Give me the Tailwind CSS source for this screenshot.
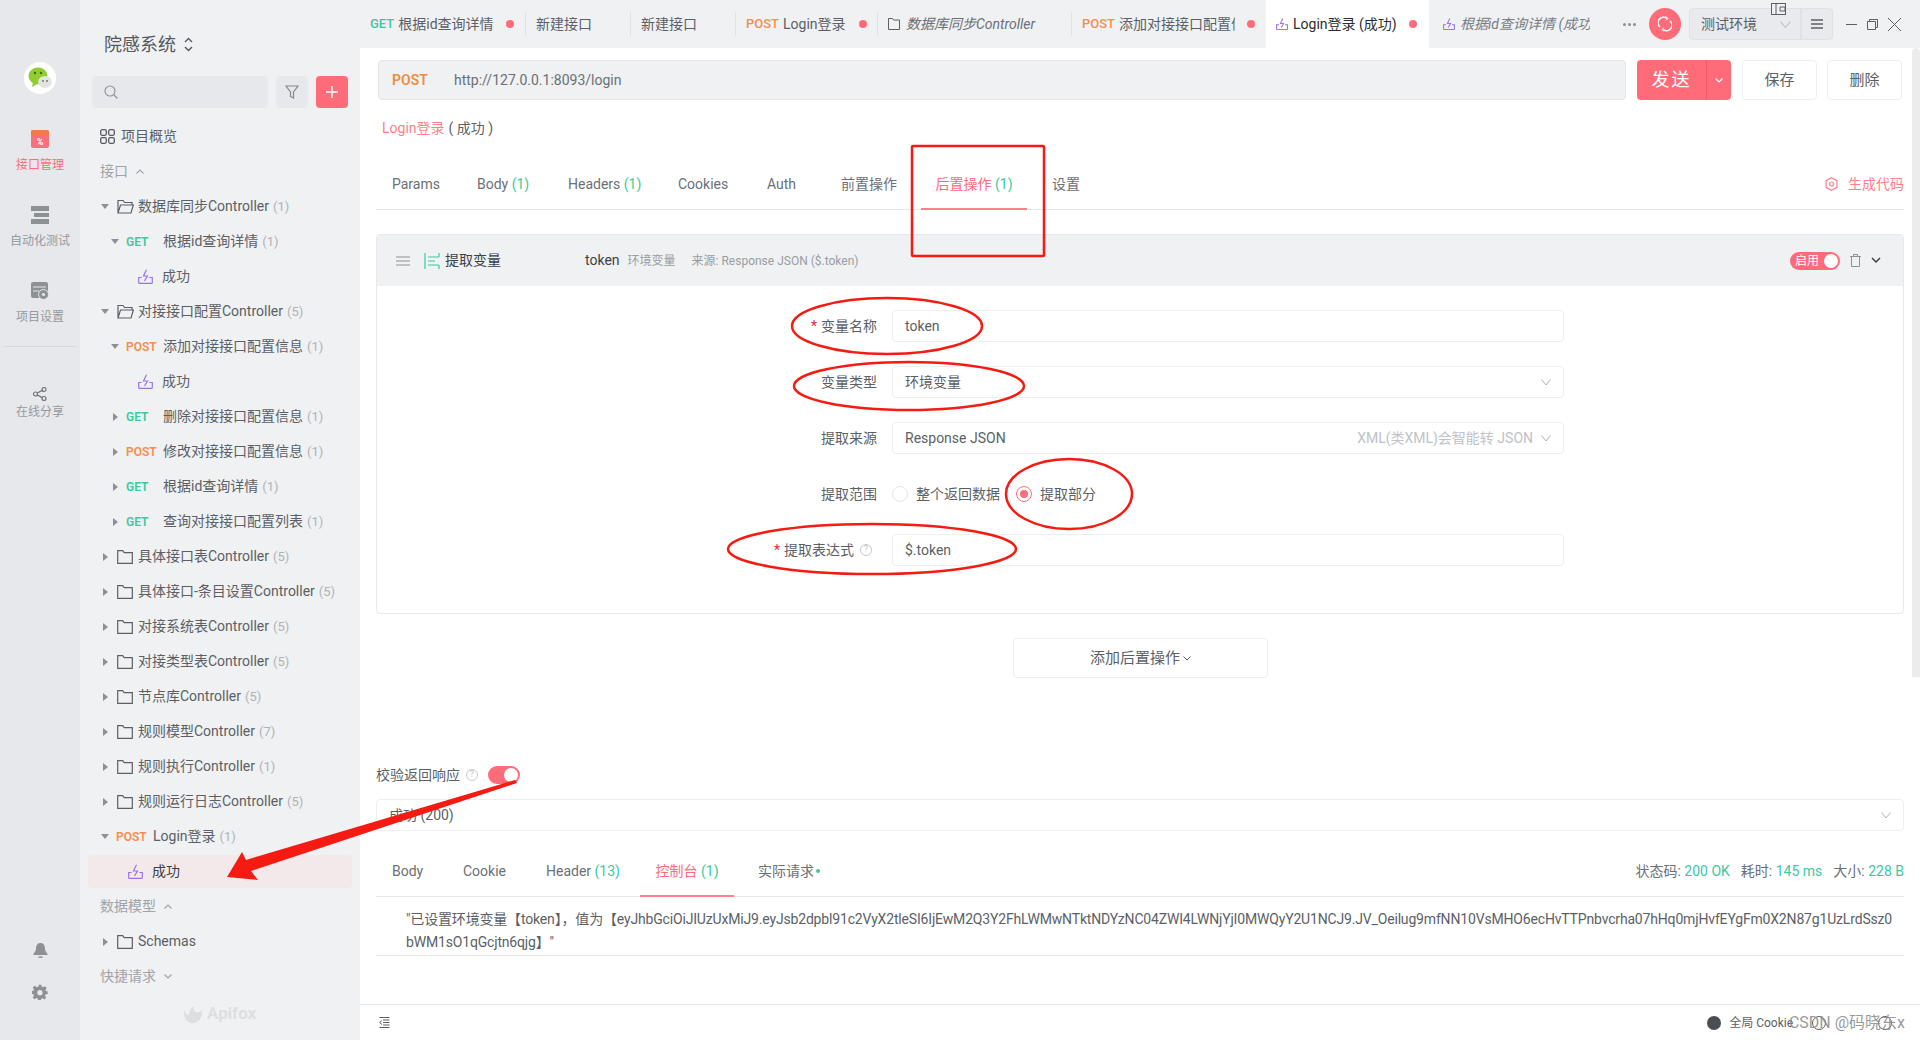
<!DOCTYPE html>
<html lang="zh-CN">
<head>
  <meta charset="UTF-8">
  <title>Apifox - Login登录</title>
  <script src="https://cdn.jsdelivr.net/npm/@tailwindcss/browser@4"></script>
</head>
<body class="relative flex w-[1920px] h-[1040px] overflow-hidden bg-white text-[14px] text-[#5c5f66] font-['Roboto','Noto_Sans_CJK_SC',sans-serif]">
  <!-- Rail -->
  <div class="flex flex-col items-center w-20 shrink-0 bg-[#e6e8eb] text-[12px] text-[#96999e]">
    <div class="flex items-center justify-center mt-[62px] w-8 h-8 rounded-full bg-white">
      <svg class="w-7 h-7" viewBox="0 0 28 28"><ellipse cx="12" cy="12" rx="9.5" ry="8.5" fill="#8fce2e"/><path d="M7 18l-1 5 5-3z" fill="#8fce2e"/><ellipse cx="19" cy="18" rx="7" ry="6" fill="#e4e4e0"/><circle cx="9" cy="9" r="1.2" fill="#3d6b10"/><circle cx="15" cy="9" r="1.2" fill="#3d6b10"/><circle cx="17" cy="17" r="1" fill="#777"/><circle cx="21" cy="17" r="1" fill="#777"/></svg>
    </div>
    <svg class="mt-9 w-[18px] h-[18px]" viewBox="0 0 18 18"><rect width="18" height="18" rx="2" fill="#f9707d"/><rect width="18" height="5" rx="2" fill="#ee7a4f"/><text x="9" y="15" text-anchor="middle" font-size="9" font-weight="700" fill="#fff">%</text></svg>
    <span class="mt-2 text-[#ff6b78]">接口管理</span>
    <svg class="mt-[32px] w-[18px] h-[18px]" viewBox="0 0 18 18" fill="#8d9095"><rect width="18" height="5"/><rect x="3" y="7" width="15" height="4"/><rect y="13" width="18" height="5"/></svg>
    <span class="mt-2">自动化测试</span>
    <svg class="mt-[32px] w-[18px] h-[18px]" viewBox="0 0 18 18"><rect width="17" height="16" rx="2" fill="#8d9095"/><path d="M2 5h13M2 9h6" stroke="#e6e8eb"/><circle cx="12.5" cy="12.5" r="5" fill="#8d9095" stroke="#e6e8eb"/><circle cx="12.5" cy="12.5" r="1.6" fill="#e6e8eb"/></svg>
    <span class="mt-2">项目设置</span>
    <div class="mt-[20px] w-[72px] h-px bg-[#d6d8db]"></div>
    <svg class="mt-[40px] w-[14px] h-[14px]" viewBox="0 0 14 14" fill="none" stroke="#6f7277" stroke-width="1.2"><circle cx="11" cy="2.5" r="2"/><circle cx="2.5" cy="7" r="2"/><circle cx="11" cy="11.5" r="2"/><path d="M4.3 6l5-2.6M4.3 8l5 2.6"/></svg>
    <span class="mt-[2px]">在线分享</span>
    <svg class="mt-auto w-[15px] h-[15px]" viewBox="0 0 15 15" fill="#8d9095"><path d="M7.5 0C4 0 3 3 3 6c0 3-3 4-2.500 6h14c.5-2-2.500-3-2.500-6 0-3-1-6-4.500-6zM5 13.500h5c-.5 2-4.500 2-5 0z"/></svg>
    <svg class="mt-[26px] mb-[40px] w-4 h-4" viewBox="0 0 24 24" fill="#8d9095"><path fill-rule="evenodd" d="M10 1h4l.6 3.200 2 .8 2.700-1.800 2.800 2.800-1.900 2.700.9 2L23.500 11v4l-3.200.6-.9 2 1.900 2.700-2.800 2.800-2.700-1.900-2 .9-.6 2.900h-4l-.6-3.100-2-.8-2.700 1.800-2.800-2.800 1.800-2.700-.8-2-3.200-.6v-4l3.200-.6.8-2-1.800-2.700 2.800-2.800L7.600 5l2-.8zM12 9a4 4 0 100 8 4 4 0 000-8z"/></svg>
  </div>

  <!-- Sidebar -->
  <div class="flex flex-col w-[280px] shrink-0 bg-[#eff1f3] whitespace-nowrap">
    <div class="flex items-center gap-2 pl-[24px] mt-[32px] h-6 text-[18px] text-[#55585e]">院感系统
      <svg class="w-[9px] h-[15px]" viewBox="0 0 9 15" fill="none" stroke="#55585e" stroke-width="1.4"><path d="M1 5l3.500-3.500L8 5M1 10l3.500 3.500L8 10"/></svg>
    </div>
    <div class="flex items-center mt-[20px] px-3">
      <div class="flex items-center w-[176px] h-8 pl-3 rounded bg-[#e6e8eb]">
        <svg class="w-[14px] h-[14px]" viewBox="0 0 14 14" fill="none" stroke="#8d9095" stroke-width="1.1"><circle cx="6" cy="6" r="5"/><path d="M10 10l3.500 3.500"/></svg>
      </div>
      <div class="flex items-center justify-center ml-2 w-8 h-8 rounded bg-[#e6e8eb]">
        <svg class="w-[14px] h-[14px]" viewBox="0 0 14 14" fill="none" stroke="#85888d" stroke-width="1.2"><path d="M1 1h12L8.500 7v6l-3-1.500V7z"/></svg>
      </div>
      <div class="flex items-center justify-center ml-2 w-8 h-8 rounded bg-[#ff6b78] text-white">
        <svg class="w-3 h-3" viewBox="0 0 12 12" stroke="#fff" stroke-width="1.4"><path d="M6 0v12M0 6h12"/></svg>
      </div>
    </div>
    <div class="flex items-center gap-[6px] pl-[20px] mt-[11px] h-[34px]">
      <svg class="w-[15px] h-[15px]" viewBox="0 0 15 15" fill="none" stroke="#55585e" stroke-width="1.3"><rect x=".7" y=".7" width="5.600" height="5.600" rx="1.500"/><rect x="8.700" y=".7" width="5.600" height="5.600" rx="1.500"/><rect x=".7" y="8.700" width="5.600" height="5.600" rx="1.500"/><rect x="8.700" y="8.700" width="5.600" height="5.600" rx="1.500"/></svg>
      <span>项目概览</span>
    </div>
    <div class="flex items-center gap-2 pl-5 h-[36px] text-[#a0a3a8]">接口
      <svg class="w-2 h-[5px]" viewBox="0 0 8 5" fill="none" stroke="#a0a3a8" stroke-width="1.1"><path d="M.5 4.500L4 1l3.500 3.500"/></svg>
    </div>

    <!-- Tree -->
    <div class="flex items-center h-[35px] pl-[21px]"><svg class="w-2 h-[5px]" viewBox="0 0 8 5" fill="#8d9095"><path d="M0 0h8L4 5z"/></svg><svg class="ml-[8px] w-[17px] h-[15px]" viewBox="0 0 17 15" fill="none" stroke="#5c5f66" stroke-width="1.2"><path d="M1 14V1.500h5l1.500 2H15v2.500M1 14l2.500-8H16.400L14 14z"/></svg><span class="ml-[4px]">数据库同步Controller</span><span class="ml-1 text-[#b0b3b8] text-[13px]">(1)</span></div>
    <div class="flex items-center h-[35px] pl-[31px]"><svg class="w-2 h-[5px]" viewBox="0 0 8 5" fill="#8d9095"><path d="M0 0h8L4 5z"/></svg><span class="ml-[7px] w-[37px] font-semibold text-[12px] text-[#3dc9a0]">GET</span><span>根据id查询详情</span><span class="ml-1 text-[#b0b3b8] text-[13px]">(1)</span></div>
    <div class="flex items-center h-[35px] pl-[58px]"><svg class="w-[15px] h-[15px]" viewBox="0 0 15 15" fill="none" stroke="#9a73ee" stroke-width="1.2"><path d="M.7 14.300V8.500h3M14.300 14.300V8.500h-3M.7 14.300h13.600M8.500.7L5.500 7h4L6.500 12"/></svg><span class="ml-[9px]">成功</span></div>
    <div class="flex items-center h-[35px] pl-[21px]"><svg class="w-2 h-[5px]" viewBox="0 0 8 5" fill="#8d9095"><path d="M0 0h8L4 5z"/></svg><svg class="ml-[8px] w-[17px] h-[15px]" viewBox="0 0 17 15" fill="none" stroke="#5c5f66" stroke-width="1.2"><path d="M1 14V1.500h5l1.500 2H15v2.500M1 14l2.500-8H16.400L14 14z"/></svg><span class="ml-[4px]">对接接口配置Controller</span><span class="ml-1 text-[#b0b3b8] text-[13px]">(5)</span></div>
    <div class="flex items-center h-[35px] pl-[31px]"><svg class="w-2 h-[5px]" viewBox="0 0 8 5" fill="#8d9095"><path d="M0 0h8L4 5z"/></svg><span class="ml-[7px] w-[37px] font-semibold text-[12px] text-[#f98c4b]">POST</span><span>添加对接接口配置信息</span><span class="ml-1 text-[#b0b3b8] text-[13px]">(1)</span></div>
    <div class="flex items-center h-[35px] pl-[58px]"><svg class="w-[15px] h-[15px]" viewBox="0 0 15 15" fill="none" stroke="#9a73ee" stroke-width="1.2"><path d="M.7 14.300V8.500h3M14.300 14.300V8.500h-3M.7 14.300h13.600M8.500.7L5.500 7h4L6.500 12"/></svg><span class="ml-[9px]">成功</span></div>
    <div class="flex items-center h-[35px] pl-[33px]"><svg class="w-[5px] h-2" viewBox="0 0 5 8" fill="#8d9095"><path d="M0 0l5 4-5 4z"/></svg><span class="ml-[8px] w-[37px] font-semibold text-[12px] text-[#3dc9a0]">GET</span><span>删除对接接口配置信息</span><span class="ml-1 text-[#b0b3b8] text-[13px]">(1)</span></div>
    <div class="flex items-center h-[35px] pl-[33px]"><svg class="w-[5px] h-2" viewBox="0 0 5 8" fill="#8d9095"><path d="M0 0l5 4-5 4z"/></svg><span class="ml-[8px] w-[37px] font-semibold text-[12px] text-[#f98c4b]">POST</span><span>修改对接接口配置信息</span><span class="ml-1 text-[#b0b3b8] text-[13px]">(1)</span></div>
    <div class="flex items-center h-[35px] pl-[33px]"><svg class="w-[5px] h-2" viewBox="0 0 5 8" fill="#8d9095"><path d="M0 0l5 4-5 4z"/></svg><span class="ml-[8px] w-[37px] font-semibold text-[12px] text-[#3dc9a0]">GET</span><span>根据id查询详情</span><span class="ml-1 text-[#b0b3b8] text-[13px]">(1)</span></div>
    <div class="flex items-center h-[35px] pl-[33px]"><svg class="w-[5px] h-2" viewBox="0 0 5 8" fill="#8d9095"><path d="M0 0l5 4-5 4z"/></svg><span class="ml-[8px] w-[37px] font-semibold text-[12px] text-[#3dc9a0]">GET</span><span>查询对接接口配置列表</span><span class="ml-1 text-[#b0b3b8] text-[13px]">(1)</span></div>
    <div class="flex items-center h-[35px] pl-[23px]"><svg class="w-[5px] h-2" viewBox="0 0 5 8" fill="#8d9095"><path d="M0 0l5 4-5 4z"/></svg><svg class="ml-[9px] w-4 h-[14px]" viewBox="0 0 16 14" fill="none" stroke="#5c5f66" stroke-width="1.2"><path d="M.7 13.300V.7h5l1.500 2h8.100v10.600z"/></svg><span class="ml-[5px]">具体接口表Controller</span><span class="ml-1 text-[#b0b3b8] text-[13px]">(5)</span></div>
    <div class="flex items-center h-[35px] pl-[23px]"><svg class="w-[5px] h-2" viewBox="0 0 5 8" fill="#8d9095"><path d="M0 0l5 4-5 4z"/></svg><svg class="ml-[9px] w-4 h-[14px]" viewBox="0 0 16 14" fill="none" stroke="#5c5f66" stroke-width="1.2"><path d="M.7 13.300V.7h5l1.500 2h8.100v10.600z"/></svg><span class="ml-[5px]">具体接口-条目设置Controller</span><span class="ml-1 text-[#b0b3b8] text-[13px]">(5)</span></div>
    <div class="flex items-center h-[35px] pl-[23px]"><svg class="w-[5px] h-2" viewBox="0 0 5 8" fill="#8d9095"><path d="M0 0l5 4-5 4z"/></svg><svg class="ml-[9px] w-4 h-[14px]" viewBox="0 0 16 14" fill="none" stroke="#5c5f66" stroke-width="1.2"><path d="M.7 13.300V.7h5l1.500 2h8.100v10.600z"/></svg><span class="ml-[5px]">对接系统表Controller</span><span class="ml-1 text-[#b0b3b8] text-[13px]">(5)</span></div>
    <div class="flex items-center h-[35px] pl-[23px]"><svg class="w-[5px] h-2" viewBox="0 0 5 8" fill="#8d9095"><path d="M0 0l5 4-5 4z"/></svg><svg class="ml-[9px] w-4 h-[14px]" viewBox="0 0 16 14" fill="none" stroke="#5c5f66" stroke-width="1.2"><path d="M.7 13.300V.7h5l1.500 2h8.100v10.600z"/></svg><span class="ml-[5px]">对接类型表Controller</span><span class="ml-1 text-[#b0b3b8] text-[13px]">(5)</span></div>
    <div class="flex items-center h-[35px] pl-[23px]"><svg class="w-[5px] h-2" viewBox="0 0 5 8" fill="#8d9095"><path d="M0 0l5 4-5 4z"/></svg><svg class="ml-[9px] w-4 h-[14px]" viewBox="0 0 16 14" fill="none" stroke="#5c5f66" stroke-width="1.2"><path d="M.7 13.300V.7h5l1.500 2h8.100v10.600z"/></svg><span class="ml-[5px]">节点库Controller</span><span class="ml-1 text-[#b0b3b8] text-[13px]">(5)</span></div>
    <div class="flex items-center h-[35px] pl-[23px]"><svg class="w-[5px] h-2" viewBox="0 0 5 8" fill="#8d9095"><path d="M0 0l5 4-5 4z"/></svg><svg class="ml-[9px] w-4 h-[14px]" viewBox="0 0 16 14" fill="none" stroke="#5c5f66" stroke-width="1.2"><path d="M.7 13.300V.7h5l1.500 2h8.100v10.600z"/></svg><span class="ml-[5px]">规则模型Controller</span><span class="ml-1 text-[#b0b3b8] text-[13px]">(7)</span></div>
    <div class="flex items-center h-[35px] pl-[23px]"><svg class="w-[5px] h-2" viewBox="0 0 5 8" fill="#8d9095"><path d="M0 0l5 4-5 4z"/></svg><svg class="ml-[9px] w-4 h-[14px]" viewBox="0 0 16 14" fill="none" stroke="#5c5f66" stroke-width="1.2"><path d="M.7 13.300V.7h5l1.500 2h8.100v10.600z"/></svg><span class="ml-[5px]">规则执行Controller</span><span class="ml-1 text-[#b0b3b8] text-[13px]">(1)</span></div>
    <div class="flex items-center h-[35px] pl-[23px]"><svg class="w-[5px] h-2" viewBox="0 0 5 8" fill="#8d9095"><path d="M0 0l5 4-5 4z"/></svg><svg class="ml-[9px] w-4 h-[14px]" viewBox="0 0 16 14" fill="none" stroke="#5c5f66" stroke-width="1.2"><path d="M.7 13.300V.7h5l1.500 2h8.100v10.600z"/></svg><span class="ml-[5px]">规则运行日志Controller</span><span class="ml-1 text-[#b0b3b8] text-[13px]">(5)</span></div>
    <div class="flex items-center h-[35px] pl-[21px]"><svg class="w-2 h-[5px]" viewBox="0 0 8 5" fill="#8d9095"><path d="M0 0h8L4 5z"/></svg><span class="ml-[7px] w-[37px] font-semibold text-[12px] text-[#f98c4b]">POST</span><span>Login登录</span><span class="ml-1 text-[#b0b3b8] text-[13px]">(1)</span></div>
    <div class="flex items-center mx-2 h-[33px] my-px pl-10 rounded bg-[#f3e9ea] text-[#3c3f45]"><svg class="w-[15px] h-[15px]" viewBox="0 0 15 15" fill="none" stroke="#9a73ee" stroke-width="1.2"><path d="M.7 14.300V8.500h3M14.300 14.300V8.500h-3M.7 14.300h13.600M8.500.7L5.500 7h4L6.500 12"/></svg><span class="ml-[9px]">成功</span></div>
    <div class="flex items-center gap-2 pl-5 h-[35px] text-[#a0a3a8]">数据模型
      <svg class="w-2 h-[5px]" viewBox="0 0 8 5" fill="none" stroke="#a0a3a8" stroke-width="1.1"><path d="M.5 4.500L4 1l3.500 3.500"/></svg>
    </div>
    <div class="flex items-center h-[35px] pl-[23px]"><svg class="w-[5px] h-2" viewBox="0 0 5 8" fill="#8d9095"><path d="M0 0l5 4-5 4z"/></svg><svg class="ml-[9px] w-4 h-[14px]" viewBox="0 0 16 14" fill="none" stroke="#5c5f66" stroke-width="1.2"><path d="M.7 13.300V.7h5l1.500 2h8.100v10.600z"/></svg><span class="ml-[5px]">Schemas</span></div>
    <div class="flex items-center gap-2 pl-5 h-[35px] text-[#a0a3a8]">快捷请求
      <svg class="w-2 h-[5px]" viewBox="0 0 8 5" fill="none" stroke="#a0a3a8" stroke-width="1.1"><path d="M.5.5L4 4 7.500.5"/></svg>
    </div>
    <div class="flex items-center gap-1 ml-[103px] mt-[7px] text-[17px] font-semibold text-[#dcdee1]">
      <svg class="w-5 h-5" viewBox="0 0 20 20" fill="#dcdee1"><path d="M10 19C4 19 0 14 1 6c1 4 3 5 5 5 0-4 2-7 5-9-1 3 0 5 2 6 2 .8 4 .5 6-2 1 7-3 13-9 13z"/></svg>
      <span>Apifox</span>
    </div>
  </div>

  <!-- Main -->
  <div class="flex flex-col flex-1 min-w-0">
    <!-- Tab bar -->
    <div class="flex items-center h-12 shrink-0 bg-[#eff1f3] text-[#5c5f66] whitespace-nowrap">
      <div class="flex items-center w-[166px] h-full pl-[10px]"><span class="flex items-center h-6 w-full border-r border-[#e0e2e5]"><span class="mr-1 text-[13px] font-medium text-[#3dc9a0]">GET</span>根据id查询详情<span class="ml-[12px] w-2 h-2 rounded-full bg-[#ff6b78]"></span></span></div>
      <div class="flex items-center w-[105px] h-full pl-[10px]"><span class="flex items-center h-6 w-full border-r border-[#e0e2e5]">新建接口</span></div>
      <div class="flex items-center w-[105px] h-full pl-[10px]"><span class="flex items-center h-6 w-full border-r border-[#e0e2e5]">新建接口</span></div>
      <div class="flex items-center w-[142px] h-full pl-[10px]"><span class="flex items-center h-6 w-full border-r border-[#e0e2e5]"><span class="mr-1 text-[13px] font-medium text-[#f98c4b]">POST</span>Login登录<span class="ml-[13px] w-2 h-2 rounded-full bg-[#ff6b78]"></span></span></div>
      <div class="flex items-center w-[194px] h-full pl-[10px]"><span class="flex items-center h-6 w-full border-r border-[#e0e2e5] italic text-[#6c6f75]"><svg class="mr-[6px] w-3 h-3" viewBox="0 0 12 12" fill="none" stroke="#5c5f66"><path d="M.5 11.500V.5h4l1 1.500h6v9.500z"/></svg>数据库同步Controller</span></div>
      <div class="flex items-center w-[194px] h-full pl-[10px]"><span class="flex items-center h-6 w-[184px]"><span class="mr-1 text-[13px] font-medium text-[#f98c4b]">POST</span><span class="w-[116px] overflow-hidden">添加对接接口配置信息</span><span class="ml-[12px] w-2 h-2 rounded-full bg-[#ff6b78]"></span></span></div>
      <div class="flex items-center w-[163px] h-full pl-[10px] bg-white text-[#2b2d31]"><svg class="mr-[5px] w-3 h-[14px]" viewBox="0 0 15 15" fill="none" stroke="#9a73ee" stroke-width="1.300"><path d="M.7 14.300V8.500h3M14.300 14.300V8.500h-3M.7 14.300h13.600M8.500.7L5.500 7h4L6.500 12"/></svg>Login登录 (成功)<span class="ml-[12px] w-2 h-2 rounded-full bg-[#ff6b78]"></span></div>
      <div class="flex items-center w-[177px] h-full pl-[14px] italic text-[#7a7d83]"><svg class="shrink-0 mr-[5px] w-3 h-[14px]" viewBox="0 0 15 15" fill="none" stroke="#9a73ee" stroke-width="1.300"><path d="M.7 14.300V8.500h3M14.300 14.300V8.500h-3M.7 14.300h13.600M8.500.7L5.500 7h4L6.500 12"/></svg><span class="w-[130px] overflow-hidden">根据id查询详情 (成功)</span></div>
      <div class="flex items-center gap-[2px] ml-[17px]"><span class="w-[3px] h-[3px] rounded-full bg-[#8d9095]"></span><span class="w-[3px] h-[3px] rounded-full bg-[#8d9095]"></span><span class="w-[3px] h-[3px] rounded-full bg-[#8d9095]"></span></div>
      <div class="flex items-center justify-center ml-[13px] w-8 h-8 rounded-full bg-[#ff6b78]">
        <svg class="w-[14px] h-4" viewBox="0 0 14 16" fill="none" stroke="#fff" stroke-width="1.500"><path d="M2 11A5.500 5.500 0 019 2.500M12 5a5.500 5.500 0 01-7 8.500"/><path d="M8 .5l2 2-2 2M6 11.500l-2 2 2 2" stroke-width="1"/></svg>
      </div>
      <div class="relative flex items-center ml-2 w-[144px] h-8 rounded border border-[#dfe1e4] bg-[#e8eaed]">
        <span class="pl-[11px] w-[111px]">测试环境</span>
        <svg class="absolute left-[90px] top-[12px] w-[11px] h-[7px]" viewBox="0 0 11 7" fill="none" stroke="#b0b3b8"><path d="M.5.5l5 6 5-6"/></svg>
        <svg class="absolute left-[81px] top-[-6px] w-[15px] h-3" viewBox="0 0 15 12" fill="#eff1f3" stroke="#5c5f66"><rect x=".5" y=".5" width="14" height="11"/><path d="M5 .5v11M9 4h5v4H9z"/></svg>
        <span class="flex items-center justify-center w-8 h-full border-l-2 border-[#dfe1e4]">
          <svg class="w-3 h-[10px]" viewBox="0 0 12 10" stroke="#5c5f66" stroke-width="1.300"><path d="M0 1h12M0 5h12M0 9h12"/></svg>
        </span>
      </div>
      <svg class="ml-[13px] w-[11px] h-px" viewBox="0 0 11 1" stroke="#5c5f66"><path d="M0 .5h11"/></svg>
      <svg class="ml-[10px] w-[11px] h-[11px]" viewBox="0 0 11 11" fill="none" stroke="#5c5f66"><path d="M.5 2.500h8v8h-8zM2.500 2.500v-2h8v8h-2"/></svg>
      <svg class="ml-[10px] w-[13px] h-[13px]" viewBox="0 0 13 13" stroke="#5c5f66"><path d="M0 0l13 13M13 0L0 13"/></svg>
    </div>

    <!-- Url row -->
    <div class="flex items-center gap-[11px] mt-3 pl-[18px] pr-[18px] h-10 shrink-0">
      <div class="flex items-center flex-1 h-full rounded border border-[#e3e5e8] bg-[#eff1f3]">
        <span class="pl-[13px] w-[75px] font-semibold text-[#f08c3c]">POST</span>
        <span class="text-[#6c6f75]">http://127.0.0.1:8093/login</span>
      </div>
      <div class="flex items-center w-[94px] h-full rounded bg-[#ff6b78] text-white">
        <span class="w-[70px] text-center text-[18px] tracking-[2px] border-r border-[#ee5c69] leading-10">发送</span>
        <svg class="ml-[8px] w-2 h-[5px]" viewBox="0 0 8 5" fill="none" stroke="#fff" stroke-width="1.200"><path d="M.5.5L4 4 7.500.5"/></svg>
      </div>
      <div class="flex items-center justify-center w-[75px] h-full rounded border border-[#eceef0] text-[15px]">保存</div>
      <div class="flex items-center justify-center -ml-[1px] w-[75px] h-full rounded border border-[#eceef0] text-[15px]">删除</div>
    </div>

    <div class="flex items-center h-[56px] shrink-0 pl-[22px]"><span class="text-[#ff7f8b]">Login登录</span><span class="ml-1 text-[#5c5f66]">( 成功 )</span></div>

    <!-- Request tabs -->
    <div class="flex items-center mx-4 h-[51px] mt-[3px] shrink-0 border-b border-[#e6e8eb] text-[#6c6f75]">
      <span class="ml-4 w-[85px]">Params</span>
      <span class="w-[91px]">Body <span class="text-[#3dc9a0]">(1)</span></span>
      <span class="w-[110px]">Headers <span class="text-[#3dc9a0]">(1)</span></span>
      <span class="w-[89px]">Cookies</span>
      <span class="w-[74px]">Auth</span>
      <span class="w-[80px]">前置操作</span>
      <span class="relative flex items-center justify-center w-[106px] h-full text-[#ff6b78]">后置操作&nbsp;<span class="text-[#3dc9a0]">(1)</span><span class="absolute left-0 right-0 bottom-[-1px] h-[2px] bg-[#ff7f8b]"></span></span>
      <span class="ml-[25px]">设置</span>
      <span class="flex items-center ml-auto text-[#ff7f8b]">
        <svg class="mr-[10px] w-[13px] h-[14px]" viewBox="0 0 13 14" fill="none" stroke="#ff7f8b" stroke-width="1.200"><path d="M6.500.7l5.400 3v6.600l-5.400 3-5.400-3V3.700z"/><circle cx="6.500" cy="7" r="2"/></svg>生成代码
      </span>
    </div>

    <!-- Post-processor panel -->
    <div class="mx-4 mt-[24px] h-[380px] shrink-0 rounded border border-[#e6e8eb]">
      <div class="flex items-center h-[51px] bg-[#eff1f3]">
        <svg class="ml-[19px] w-[14px] h-[10px]" viewBox="0 0 14 10" stroke="#8d9095" stroke-width="1.200"><path d="M0 1h14M0 5h14M0 9h14"/></svg>
        <svg class="ml-[14px] w-[16px] h-4" viewBox="0 0 16 16" fill="none" stroke="#3dc9a0" stroke-width="1.200"><path d="M1 0v16M15 0v4M15 12v4M4 4h11M4 12h11M4 8h7"/></svg>
        <span class="ml-[5px] text-[#3c3f45]">提取变量</span>
        <span class="ml-[84px] text-[#3c3f45]">token</span>
        <span class="ml-2 text-[12px] text-[#9a9da2]">环境变量</span>
        <span class="ml-4 text-[12px] text-[#9a9da2]">来源: Response JSON ($.token)</span>
        <span class="flex items-center justify-between ml-auto w-[50px] h-[18px] pl-[5px] pr-[2px] rounded-full bg-[#ff6b78] text-[12px] text-white">启用<span class="w-[14px] h-[14px] rounded-full bg-white"></span></span>
        <svg class="ml-[10px] w-[11px] h-[13px]" viewBox="0 0 11 13" fill="none" stroke="#8d9095"><path d="M0 2.500h11M3.500 2.500V.5h4v2M1.500 2.500v10h8v-10"/></svg>
        <svg class="ml-[10px] mr-[22px] w-[10px] h-[7px]" viewBox="0 0 10 7" fill="none" stroke="#3c3f45" stroke-width="1.500"><path d="M1 1l4 4 4-4"/></svg>
      </div>
      <div class="flex flex-col mt-6 gap-[24px]">
        <div class="flex items-center h-8">
          <span class="w-[500px] text-right"><span class="mr-1 text-[#e5243b]">*</span>变量名称</span>
          <div class="flex items-center ml-[15px] w-[672px] h-full pl-3 rounded border border-[#eceef0]">token</div>
        </div>
        <div class="flex items-center h-8">
          <span class="w-[500px] text-right">变量类型</span>
          <div class="flex items-center ml-[15px] w-[672px] h-full pl-3 pr-[12px] rounded border border-[#eceef0]">环境变量<svg class="ml-auto w-[10px] h-[7px]" viewBox="0 0 10 7" fill="none" stroke="#b0b3b8"><path d="M.5.5L5 6 9.500.5"/></svg></div>
        </div>
        <div class="flex items-center h-8">
          <span class="w-[500px] text-right">提取来源</span>
          <div class="flex items-center ml-[15px] w-[672px] h-full pl-3 pr-[12px] rounded border border-[#eceef0]">Response JSON<span class="ml-auto mr-2 text-[#c0c2c6]">XML(类XML)会智能转 JSON</span><svg class="w-[10px] h-[7px]" viewBox="0 0 10 7" fill="none" stroke="#b0b3b8"><path d="M.5.5L5 6 9.500.5"/></svg></div>
        </div>
        <div class="flex items-center h-8">
          <span class="w-[500px] text-right">提取范围</span>
          <span class="ml-[15px] w-4 h-4 rounded-full border border-[#e3e5e8]"></span>
          <span class="ml-2">整个返回数据</span>
          <span class="flex items-center justify-center ml-4 w-4 h-4 rounded-full border border-[#ff6b78]"><span class="w-2 h-2 rounded-full bg-[#ff6b78]"></span></span>
          <span class="ml-2">提取部分</span>
        </div>
        <div class="flex items-center h-8">
          <span class="flex items-center justify-end w-[500px] pr-[5px]"><span class="mr-1 text-[#e5243b]">*</span>提取表达式<span class="flex items-center justify-center ml-[6px] w-3 h-3 rounded-full border border-[#c8cace] text-[9px] text-[#c0c2c6]">?</span></span>
          <div class="flex items-center ml-[15px] w-[672px] h-full pl-3 rounded border border-[#eceef0]">$.token</div>
        </div>
      </div>
    </div>

    <div class="flex items-center justify-center self-start ml-[653px] mt-[24px] w-[255px] h-10 shrink-0 rounded border border-[#eceef0] text-[15px]">添加后置操作<svg class="ml-[3px] w-2 h-[5px]" viewBox="0 0 8 5" fill="none" stroke="#5c5f66"><path d="M.5.5L4 4 7.500.5"/></svg></div>

    <div class="flex items-center mt-[85px] ml-4 h-6 shrink-0">
      <span>校验返回响应</span>
      <span class="flex items-center justify-center ml-[6px] w-3 h-3 rounded-full border border-[#c8cace] text-[9px] text-[#c0c2c6]">?</span>
      <span class="flex items-center justify-end ml-[10px] w-8 h-[18px] pr-[2px] rounded-full bg-[#ff6b78]"><span class="w-[14px] h-[14px] rounded-full bg-white"></span></span>
    </div>
    <div class="flex items-center mx-4 mt-3 h-8 shrink-0 pl-3 pr-3 rounded border border-[#eceef0]">成功 (200)<svg class="ml-auto w-[10px] h-[7px]" viewBox="0 0 10 7" fill="none" stroke="#b0b3b8"><path d="M.5.5L5 6 9.500.5"/></svg></div>

    <!-- Response tabs -->
    <div class="flex items-center mx-4 mt-[15px] h-[51px] shrink-0 border-b border-[#e6e8eb] text-[#6c6f75]">
      <span class="ml-4 w-[71px]">Body</span>
      <span class="w-[83px]">Cookie</span>
      <span class="w-[94px]">Header <span class="text-[#3dc9a0]">(13)</span></span>
      <span class="relative flex items-center justify-center w-[94px] h-full text-[#ff6b78]">控制台&nbsp;<span class="text-[#3dc9a0]">(1)</span><span class="absolute left-0 right-0 bottom-[-1px] h-[2px] bg-[#ff7f8b]"></span></span>
      <span class="flex items-center gap-[2px] ml-[24px]">实际请求<span class="w-1 h-1 rounded-full bg-[#3dc9a0]"></span></span>
      <span class="ml-auto">状态码: <span class="text-[#3dc9a0]">200 OK</span></span>
      <span class="ml-[11px]">耗时: <span class="text-[#3dc9a0]">145 ms</span></span>
      <span class="ml-[11px]">大小: <span class="text-[#3dc9a0]">228 B</span></span>
    </div>
    <div class="mx-4 h-[59px] shrink-0 pl-[30px] pt-[11px] border-b border-[#e6e8eb] leading-[23px] whitespace-nowrap text-[14px] tracking-[-0.17px]">"已设置环境变量【token】，值为【eyJhbGciOiJIUzUxMiJ9.eyJsb2dpbl91c2VyX2tleSI6IjEwM2Q3Y2FhLWMwNTktNDYzNC04ZWI4LWNjYjI0MWQyY2U1NCJ9.JV_Oeilug9mfNN10VsMHO6ecHvTTPnbvcrha07hHq0mjHvfEYgFm0X2N87g1UzLrdSsz0<br>bWM1sO1qGcjtn6qjg】"</div>

    <!-- Footer -->
    <div class="flex items-center mt-auto h-9 shrink-0 pl-[19px] border-t border-[#e6e8eb] text-[12px]">
      <svg class="w-[11px] h-[11px]" viewBox="0 0 11 11" fill="none" stroke="#5c5f66"><path d="M.5.5h10M.5 10.500h10M4 3h6.500M4 5.500h6.500M4 8h6.500M3 3.500L.5 5.500 3 7.500"/></svg>
      <span class="flex items-center ml-auto mr-[28px]">
        <span class="w-[14px] h-[14px] rounded-full bg-[#4a4d52]"></span>
        <span class="ml-2">全局 Cookie</span>
        <span class="ml-[19px] w-[14px] h-[14px] rounded-full border border-[#5c5f66]"></span>
        <span class="ml-[52px] w-[14px] h-[14px] rounded-full border border-[#5c5f66]"></span>
      </span>
    </div>
  </div>

  <!-- Scrollbar -->
  <div class="absolute right-0 top-12 w-2 h-[629px] rounded-t bg-[#ececee]"></div>

  <!-- Watermark -->
  <div class="absolute right-[15px] bottom-[5px] text-[16px] text-[#8c8c8c]/90">CSDN @码晓东x</div>

  <!-- Annotations painted over the screenshot -->
  <svg class="absolute inset-0 pointer-events-none" width="1920" height="1040" viewBox="0 0 1920 1040" fill="none" stroke="#f51b12" stroke-width="2.500">
    <rect x="912" y="146" width="132" height="110" rx="1"/>
    <ellipse cx="887" cy="326" rx="95" ry="28"/>
    <ellipse cx="909" cy="386" rx="115" ry="24"/>
    <ellipse cx="1069" cy="494" rx="63" ry="35"/>
    <ellipse cx="872" cy="549" rx="144" ry="25"/>
    <path d="M515 780L246 860 242 852 227 877 258 880 251 871 517 783z" fill="#f51b12" stroke="none"/>
  </svg>
</body>
</html>
